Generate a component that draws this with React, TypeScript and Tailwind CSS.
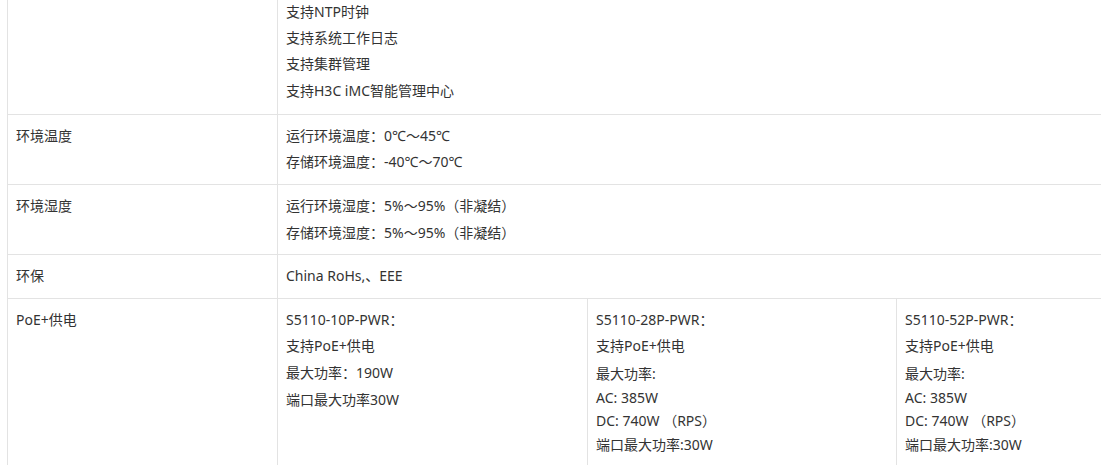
const line = "leading-[26.6px]"

function Row({ label, children, first = false }: { label?: string; children: React.ReactNode; first?: boolean }) {
    return (
        <div className="flex border-b border-[#e3e3e3]">
            <div className={`w-[270px] shrink-0 border-r border-[#e3e3e3] px-2 pt-2 pb-2 ${line}`}>
                {label}
            </div>
            <div className={`flex-1 px-2 ${first ? "-mt-px pb-[10px] leading-[26.2px]" : "pt-2 pb-2"}`}>{children}</div>
        </div>
    )
}

function Lines({ items, lh = line }: { items: string[]; lh?: string }) {
    return (
        <>
            {items.map((t) => (
                <p key={t} className={lh}>
                    {t}
                </p>
            ))}
        </>
    )
}

export default function App() {
    return (
        <div
            className="w-[1101px] h-[465px] overflow-hidden bg-white text-[14px] text-[#333333]"
            style={{ fontFamily: '"Noto Sans", "Noto Sans CJK SC", sans-serif' }}
        >
            <div className="ml-[7px] w-[1200px] border-l border-[#e3e3e3]">
                <Row first>
                    <Lines lh="" items={["支持NTP时钟", "支持系统工作日志", "支持集群管理", "支持H3C iMC智能管理中心"]} />
                </Row>
                <Row label="环境温度">
                    <Lines items={["运行环境温度：0℃～45℃", "存储环境温度：-40℃～70℃"]} />
                </Row>
                <Row label="环境湿度">
                    <Lines items={["运行环境湿度：5%～95%（非凝结）", "存储环境湿度：5%～95%（非凝结）"]} />
                </Row>
                <Row label="环保">
                    <p className={line}>China RoHs,、EEE</p>
                </Row>

                <div className="flex">
                    <div className={`w-[270px] shrink-0 border-r border-[#e3e3e3] px-2 pt-2 pb-2 h-[200px] ${line}`}>
                        PoE+供电
                    </div>
                    <div className="w-[310px] shrink-0 border-r border-[#e3e3e3] px-2 pt-2">
                        <Lines items={["S5110-10P-PWR：", "支持PoE+供电", "最大功率：190W", "端口最大功率30W"]} />
                    </div>
                    <div className="w-[309px] shrink-0 border-r border-[#e3e3e3] px-2 pt-2">
                        <Lines items={["S5110-28P-PWR：", "支持PoE+供电"]} />
                        <div className="pt-[2px] leading-[23.6px]">
                            <p>最大功率:</p>
                            <p>AC: 385W</p>
                            <p>DC: 740W （RPS）</p>
                            <p>端口最大功率:30W</p>
                        </div>
                    </div>
                    <div className="w-[310px] shrink-0 px-2 pt-2">
                        <Lines items={["S5110-52P-PWR：", "支持PoE+供电"]} />
                        <div className="pt-[2px] leading-[23.6px]">
                            <p>最大功率:</p>
                            <p>AC: 385W</p>
                            <p>DC: 740W （RPS）</p>
                            <p>端口最大功率:30W</p>
                        </div>
                    </div>
                </div>
            </div>
        </div>
    )
}
